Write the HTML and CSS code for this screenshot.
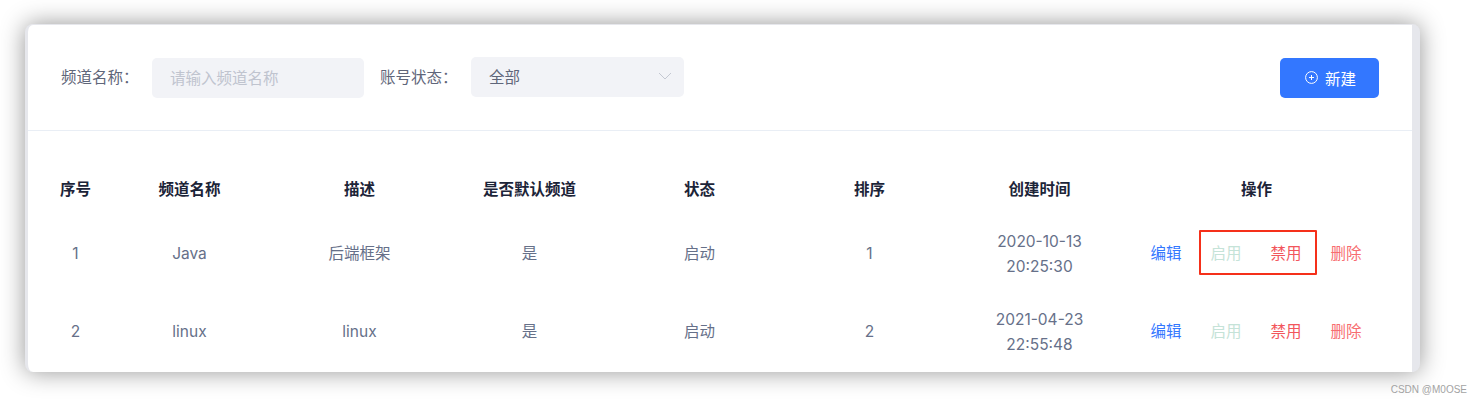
FILE: index.html
```html
<!DOCTYPE html>
<html lang="zh">
<head>
<meta charset="utf-8">
<title>频道管理</title>
<link rel="stylesheet" href="styles.css">
</head>
<body>
<main class="window">
  <section class="toolbar">
    <label class="field-label">频道名称：</label>
    <div class="control control-input">请输入频道名称</div>
    <label class="field-label">账号状态：</label>
    <div class="control control-select">
      <span>全部</span>
      <svg class="chevron" width="14" height="8" viewBox="0 0 14 8" aria-hidden="true"><path d="M1 1l6 6 6-6" fill="none" stroke="#c4c8d2" stroke-width="1"/></svg>
    </div>
    <button class="btn-new" type="button">
      <svg width="13" height="13" viewBox="0 0 13 13" aria-hidden="true"><circle cx="6.500" cy="6.500" r="5.900" fill="none" stroke="#fff" stroke-width="1"/><path d="M6.500 4v5M4 6.500h5" stroke="#fff" stroke-width="1"/></svg>
      <span>新建</span>
    </button>
  </section>
  <section class="table">
    <div class="row row-head">
      <div>序号</div><div>频道名称</div><div>描述</div><div>是否默认频道</div><div>状态</div><div>排序</div><div>创建时间</div><div>操作</div>
    </div>
    <div class="row row-body">
      <div>1</div><div>Java</div><div>后端框架</div><div>是</div><div>启动</div><div>1</div>
      <div class="time">2020-10-13<br>20:25:30</div>
      <div class="ops">
        <span class="op-edit">编辑</span><span class="op-on">启用</span><span class="op-off">禁用</span><span class="op-del">删除</span>
        <i class="highlight"></i>
      </div>
    </div>
    <div class="row row-body">
      <div>2</div><div>linux</div><div>linux</div><div>是</div><div>启动</div><div>2</div>
      <div class="time">2021-04-23<br>22:55:48</div>
      <div class="ops">
        <span class="op-edit">编辑</span><span class="op-on">启用</span><span class="op-off">禁用</span><span class="op-del">删除</span>
      </div>
    </div>
  </section>
</main>
<div class="watermark">CSDN @M0OSE</div>
</body>
</html>
```
FILE: styles.css
```css
html, body {
  margin: 0;
  height: 404px;
  overflow: hidden;
  background: #fff;
}
body {
  padding: 24px 62px 0 25px;
  box-sizing: border-box;
  font-family: "Inter", "Noto Sans CJK SC", sans-serif;
  font-size: 15.5px;
  color: #667089;
}
.window {
  height: 348px;
  box-sizing: border-box;
  background: #fff;
  border-style: solid;
  border-color: #e6e7ec;
  border-width: 1px 8px 0 3px;
  border-radius: 8px;
  overflow: hidden;
  box-shadow: 0 0 24px rgba(0, 0, 0, .42);
}
.toolbar {
  height: 106px;
  box-sizing: border-box;
  display: flex;
  align-items: center;
  padding: 0 33px;
  border-bottom: 1px solid #e9eef5;
}
.field-label {
  width: 91px;
  color: #5f667a;
  white-space: nowrap;
  padding-bottom: 4px;
}
.control {
  height: 40px;
  box-sizing: border-box;
  border-radius: 5px;
  background: #f2f3f7;
  display: flex;
  align-items: center;
  padding: 0 18px 2px;
}
.control-input {
  width: 212px;
  color: #c0c4cf;
  margin-right: 16px;
}
.control-select {
  width: 213px;
  margin-bottom: 2px;
  justify-content: space-between;
  padding-right: 12px;
  color: #5f667a;
}
.chevron { display: block; }
.btn-new {
  margin-left: auto;
  width: 99px;
  height: 40px;
  border: 0;
  padding: 0 0 0 2px;
  border-radius: 5px;
  background: #3377ff;
  color: #fff;
  font: inherit;
  display: flex;
  align-items: center;
  justify-content: center;
  gap: 7px;
}
.table { padding: 0 0 0 18.5px; }
.row {
  display: grid;
  grid-template-columns: 58px repeat(6, 170px) 264px;
  text-align: center;
  align-items: center;
  line-height: 22px;
}
.row-head {
  height: 84.5px;
  padding-top: 32.5px;
  box-sizing: border-box;
  font-weight: 700;
  color: #1c2438;
}
.row-body { height: 77.5px; }
.time { line-height: 25px; }
.ops {
  position: relative;
  left: -.5px;
  display: flex;
  justify-content: center;
  gap: 29px;
}
.op-edit { color: #3377ff; }
.op-on { color: #c5e3d8; }
.op-off { color: #f2565c; }
.op-del { color: #f76d70; }
.highlight {
  position: absolute;
  left: 75px;
  top: -13px;
  width: 114px;
  height: 41px;
  border: 2px solid #f5301a;
  border-radius: 1px;
}
.watermark {
  position: absolute;
  right: 15px;
  top: 383px;
  font-family: "Liberation Sans", sans-serif;
  font-size: 10px;
  line-height: 14px;
  color: #a3a3a3;
}
```
